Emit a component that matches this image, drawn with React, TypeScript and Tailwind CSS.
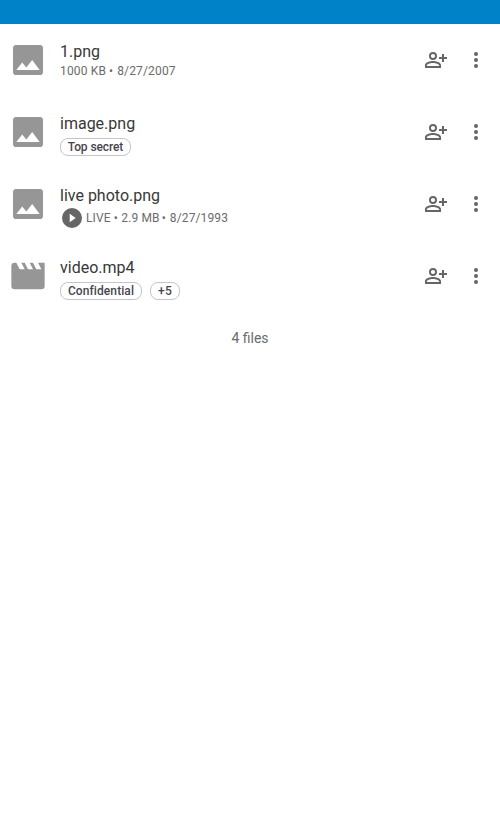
import type { ReactNode } from "react";

function ImageIcon() {
  return (
    <svg viewBox="0 0 24 24" className="size-10 shrink-0 fill-[#969696]">
      <path d="M8.5 13.5l2.5 3 3.5-4.5 4.5 6H5m16 1V5a2 2 0 0 0-2-2H5a2 2 0 0 0-2 2v14a2 2 0 0 0 2 2h14a2 2 0 0 0 2-2z" />
    </svg>
  );
}

function MovieIcon() {
  return (
    <svg viewBox="0 0 24 24" className="size-10 shrink-0 fill-[#969696]">
      <path d="M18 4l2 4h-3l-2-4h-2l2 4h-3l-2-4H8l2 4H7L5 4H4a2 2 0 0 0-2 2v12a2 2 0 0 0 2 2h16a2 2 0 0 0 2-2V4z" />
    </svg>
  );
}

function ShareIcon() {
  return (
    <svg viewBox="0 0 24 24" className="size-6 fill-[#666]">
      <path d="M9 4a4 4 0 1 0 0 8 4 4 0 0 0 0-8m0 1.9a2.1 2.1 0 1 1 0 4.2 2.1 2.1 0 0 1 0-4.2M9 13c-2.67 0-8 1.33-8 4v3h16v-3c0-2.67-5.33-4-8-4m0 1.9c2.97 0 6.1 1.46 6.1 2.1v1.1H2.9V17c0-.64 3.1-2.1 6.1-2.1M18 6h2v3h3v2h-3v3h-2v-3h-3V9h3z" />
    </svg>
  );
}

function MoreIcon() {
  return (
    <svg viewBox="0 0 24 24" className="size-6 fill-[#666]">
      <circle cx="12" cy="6" r="2" />
      <circle cx="12" cy="12" r="2" />
      <circle cx="12" cy="18" r="2" />
    </svg>
  );
}

function PlayIcon() {
  return (
    <svg viewBox="0 0 24 24" className="size-6 fill-[#666]">
      <path d="M12 2a10 10 0 1 0 0 20 10 10 0 0 0 0-20M9.7 16.3V7.7l6 4.3z" />
    </svg>
  );
}

function Tag({ className, children }: { className: string; children: string }) {
  return (
    <span
      className={`flex h-[18px] items-center justify-center rounded-[8px] border border-[#c6c2d4] text-[12px] leading-none font-medium whitespace-nowrap text-[#47464f] ${className}`}
    >
      {children}
    </span>
  );
}

function Row({ icon, name, children }: { icon: ReactNode; name: string; children: ReactNode }) {
  return (
    <li className="flex h-[72px] items-center pr-3 pl-2">
      {icon}
      <div className="ml-3 flex h-full flex-1 flex-col pt-[18px]">
        <div className="h-5 text-[16px] leading-[20px] text-[#383838]">{name}</div>
        {children}
      </div>
      <div className="flex gap-4">
        <ShareIcon />
        <MoreIcon />
      </div>
    </li>
  );
}

export default function App() {
  return (
    <div className="min-h-[833px] bg-white font-['Roboto',sans-serif]">
      <header className="h-6 bg-[#0082c9]" />
      <ul>
        <Row icon={<ImageIcon />} name="1.png">
          <div className="flex pt-px text-[12px] leading-[16px] tracking-[0.15px] text-[#6b6b6b]">
            <span>1000 KB</span>
            <span className="mr-1 ml-[3px]">•</span>
            <span>8/27/2007</span>
          </div>
        </Row>
        <Row icon={<ImageIcon />} name="image.png">
          <div className="flex pt-1">
            <Tag className="w-[71px] tracking-[-0.1px]">Top secret</Tag>
          </div>
        </Row>
        <Row icon={<ImageIcon />} name="live photo.png">
          <div className="flex items-center text-[12px] leading-[16px] tracking-[0.12px] text-[#6b6b6b]">
            <PlayIcon />
            <span className="ml-[2px]">LIVE</span>
            <span className="mr-[3.5px] ml-[3px]">•</span>
            <span>2.9 MB</span>
            <span className="mr-1 ml-[2px]">•</span>
            <span>8/27/1993</span>
          </div>
        </Row>
        <Row icon={<MovieIcon />} name="video.mp4">
          <div className="flex gap-2 pt-1">
            <Tag className="w-[82px] tracking-[0.09px]">Confidential</Tag>
            <Tag className="w-[30px] tracking-[0.3px]">+5</Tag>
          </div>
        </Row>
      </ul>
      <p className="pt-4 text-center text-[14px] leading-[20px] text-[#6b6b6b]">4 files</p>
    </div>
  );
}
